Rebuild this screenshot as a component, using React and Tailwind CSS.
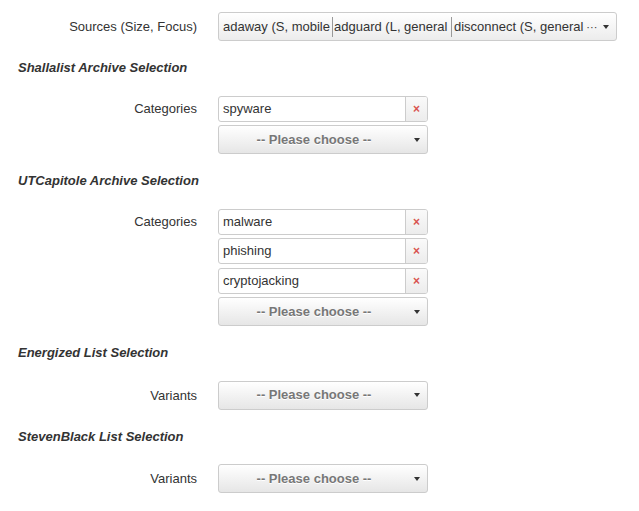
import React from "react";

const Caret = ({ right = "right-[7px]" }) => (
  <span
    className={`absolute ${right} top-1/2 -translate-y-1/2 w-0 h-0 border-l-[3px] border-r-[3px] border-t-[4px] border-l-transparent border-r-transparent border-t-[#333]`}
  />
);

const ChooseButton = () => (
  <div className="relative w-[210px] h-[29px] rounded-[3px] border border-[#cccccc] bg-gradient-to-b from-white to-[#e6e6e6] flex items-center justify-center pr-[18px]">
    <span className="text-[13px] font-bold text-[#777] [text-shadow:0_1px_0_#fff]">
      -- Please choose --
    </span>
    <Caret />
  </div>
);

const Tag = ({ label }) => (
  <div className="w-[210px] h-[26px] rounded-[3px] border border-[#cccccc] bg-white flex items-stretch overflow-hidden">
    <span className="flex-1 px-[4px] flex items-center text-[13px] text-[#333]">{label}</span>
    <span className="w-[22px] border-l border-[#cccccc] bg-gradient-to-b from-[#fafafa] to-[#ececec] flex items-center justify-center text-[12px] font-bold text-[#d9534f] leading-none">
      ×
    </span>
  </div>
);

const Row = ({ label, tall, children }) => (
  <div className="flex">
    <div
      className={`w-[198px] shrink-0 pr-[1px] text-right text-[13px] text-[#333] ${
        tall ? "leading-[29px]" : "leading-[26px]"
      }`}
    >
      {label}
    </div>
    <div className="ml-[20px] flex flex-col gap-[3.5px]">{children}</div>
  </div>
);

const Heading = ({ children }) => (
  <h3 className="pl-[18px] mt-[18px] mb-[18.5px] text-[13px] leading-[18px] font-bold italic text-[#333]">
    {children}
  </h3>
);

const App = () => {
  // shown truncated in the widget, like the original multiselect
  const sources = [
    { text: "adaway (S, mobile", w: "w-[111px]" },
    { text: "adguard (L, general", w: "w-[119px]" },
  ];

  return (
    <div className="min-h-screen bg-white pt-[12px] font-['Liberation_Sans',Arial,sans-serif]">
      <div className="flex">
        <div className="w-[198px] shrink-0 pr-[1px] text-right text-[13px] text-[#333] leading-[29px]">
          Sources (Size, Focus)
        </div>
        <div className="ml-[20px] relative w-[399px] h-[29px] rounded-[3px] border border-[#cccccc] bg-gradient-to-b from-white to-[#ececec] flex items-center pl-[3px] text-[13px] text-[#333]">
          {sources.map((s) => (
            <span
              key={s.text}
              className={`${s.w} shrink-0 whitespace-nowrap border-r border-[#999] pl-[1px] leading-[20px]`}
            >
              {s.text}
            </span>
          ))}
          <span className="pl-[2px] whitespace-nowrap leading-[20px]">disconnect (S, general</span>
          <span className="ml-[3px] text-[11px] leading-[20px]">···</span>
          <Caret right="right-[7px]" />
        </div>
      </div>

      <Heading>Shallalist Archive Selection</Heading>
      <Row label="Categories">
        <Tag label="spyware" />
        <ChooseButton />
      </Row>

      <Heading>UTCapitole Archive Selection</Heading>
      <Row label="Categories">
        <Tag label="malware" />
        <Tag label="phishing" />
        <Tag label="cryptojacking" />
        <ChooseButton />
      </Row>

      <Heading>Energized List Selection</Heading>
      <Row label="Variants" tall>
        <ChooseButton />
      </Row>

      <Heading>StevenBlack List Selection</Heading>
      <Row label="Variants" tall>
        <ChooseButton />
      </Row>
    </div>
  );
};

export default App;
